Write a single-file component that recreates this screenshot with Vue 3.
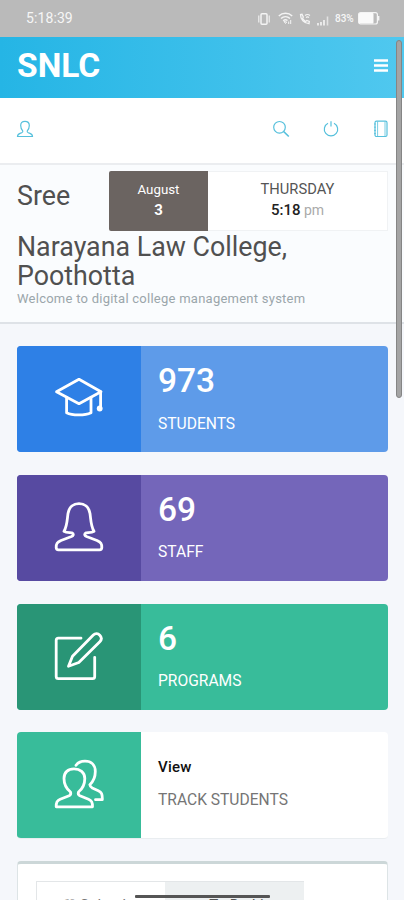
<script setup>
const cards = [
  { value: '973', label: 'STUDENTS', theme: 'blue', icon: 'cap' },
  { value: '69', label: 'STAFF', theme: 'purple', icon: 'woman' },
  { value: '6', label: 'PROGRAMS', theme: 'green', icon: 'note' },
  { value: 'View', label: 'TRACK STUDENTS', theme: 'white', icon: 'users' },
]
</script>

<template>
  <div class="screen">
    <div class="status">
      <span class="clock">5:18:39</span>
      <div class="sys">
        <svg class="s-vib" width="14" height="14" viewBox="0 0 14 14" fill="none" stroke="#f4f4f4">
          <rect x="4" y="1.7" width="6" height="10.6" rx="1" stroke-width="1.5" />
          <path d="M1.8 3.5v7M12.2 3.5v7" stroke-width="1.1" />
        </svg>
        <svg class="s-wifi" width="15" height="13" viewBox="0 0 15 13" fill="none" stroke="#f4f4f4" stroke-width="1.5">
          <path d="M.8 4C4.500 .4 10.500 .4 14.200 4M3 6.500c2.600-2.400 6.300-2.400 9 0M5.200 8.700c1.300-1.100 3-1.200 4.300-.2" />
          <path d="M6 9.500l1.500 2 1.200-1.500zM12.700 8v4M10.700 9.500v2.500" stroke-width="1" />
        </svg>
        <svg class="s-call" width="12" height="12" viewBox="0 0 12 12" fill="none" stroke="#f4f4f4">
          <path d="M1.500 1.500C1.500 6.500 5 10.300 10 10.700L10.300 8.500 7.800 7.500 6.500 8.600 3.600 5.600 4.300 4 3 1.300z" stroke-width="1.300" />
          <path d="M6 2.500c1.500-1.200 3.500-1.200 5 0M7 4.500c1-.8 2-.8 3 0" stroke-width="1.200" />
        </svg>
        <svg class="s-sig" width="12" height="11" viewBox="0 0 12 11" stroke="#f4f4f4" stroke-width="1.600">
          <path d="M1 8v2.500M4 7v3.500M7 5v5.500" /><path d="M10.500 1.500v9" opacity=".7" />
        </svg>
        <span class="pct">83%</span>
        <svg class="s-bat" width="22" height="13" viewBox="0 0 22 13">
          <rect x=".6" y=".6" width="18.800" height="11.400" rx="2" fill="none" stroke="#f4f4f4" stroke-width="1.200" />
          <rect x="1" y="1" width="14.500" height="10.600" rx="1" fill="#fafafa" />
          <path d="M20.700 4v4.500" stroke="#f4f4f4" stroke-width="1.400" />
        </svg>
      </div>
    </div>

    <header class="brandbar">
      <span class="brand">SNLC</span>
      <svg width="14" height="13" viewBox="0 0 14 13" stroke="#fff" stroke-width="2.300">
        <path d="M0 1.500h14M0 6.500h14M0 11.500h14" />
      </svg>
    </header>

    <nav class="tools">
      <svg class="t-user" width="18" height="18" viewBox="0 0 18 18">
        <path d="M6.700 10.800C5.400 9.300 4.700 7.600 4.700 5.400 4.700 2.600 6.300 1.300 9 1.300s4.300 1.300 4.300 4.100c0 2.200-.7 3.900-2 5.400-.4.900.1 1.500 1 1.900 1.700.8 4.200.9 4.200 3.800H1.500c0-2.900 2.500-3 4.200-3.800.9-.4 1.400-1 1-1.900z" />
      </svg>
      <svg class="t-search" width="18" height="18" viewBox="0 0 18 18">
        <circle cx="7.500" cy="7.300" r="5.800" /><path d="M11.600 11.500l5.200 5" stroke-width="1.700" />
      </svg>
      <svg class="t-power" width="16" height="18" viewBox="0 0 16 18">
        <path d="M5 3.200a6.700 6.700 0 1 0 6 0M8 1.200v5.300" />
      </svg>
      <svg class="t-book" width="16" height="18" viewBox="0 0 16 18">
        <rect x="2" y="1.200" width="12" height="15.300" rx="1.500" /><path d="M4.600 1.500v15M12 1.500v15M1 4h2M1 7.200h2M1 10.400h2M1 13.600h2" stroke-width=".8" />
      </svg>
    </nav>

    <section class="hero">
      <div class="top">
        <h2 class="sree">Sree</h2>
        <div class="datebox">
          <div class="date"><span>August</span><b>3</b></div>
          <div class="time"><span class="day">THURSDAY</span><span class="hour"><b>5:18</b> pm</span></div>
        </div>
      </div>
      <h2 class="college"><span>Narayana Law College,</span><br />Poothotta</h2>
      <p class="welcome">Welcome to digital college management system</p>
    </section>

    <main class="content">
      <article v-for="c in cards" :key="c.label" class="card" :class="c.theme">
        <div class="pic">
          <svg width="50" height="50" viewBox="0 0 50 50">
            <g v-if="c.icon === 'cap'">
              <path d="M2.500 18.800L25 6.300l22 12.500L25 30.700z" />
              <path d="M12.600 24.500v15.200c5.500 3 18.500 3 24.400 0V24.500M46.600 19v15" />
              <circle cx="45.700" cy="35.500" r="2.900" fill="#fff" stroke="none" />
            </g>
            <path v-else-if="c.icon === 'woman'" d="M10 29.300C13.200 24.500 13.200 17 14 11.500 15 5 19.500 1.700 25 1.700s10 3.300 11 9.800c.8 5.500.8 13 4 17.800-2 1.400-4.500 1.200-7.800 1.500-2.500 1.200-1.500 2.900.3 3.700L43 38.500c4 1.900 4.800 3 4.800 7q0 2.300-2.300 2.300h-41q-2.300 0-2.300-2.300c0-4 .8-5.100 4.800-7l10.500-4c1.800-.8 2.800-2.500.3-3.700-3.300-.3-5.800-.1-7.800-1.500z" />
            <g v-else-if="c.icon === 'note'">
              <path d="M27 7.200H4.300Q2.200 7.200 2.200 9.300v36.200q0 2.100 2.100 2.100h34.300q2.100 0 2.100-2.100V26.300" />
              <path d="M18.500 25.200L39.300 4.100c2-2 4.700-1.800 6.500.1s2 4.500 0 6.500L24.800 31.500 14.500 35.300z" />
            </g>
            <g v-else>
              <path d="M16.500 33c-4-3.200-6.500-7.700-6.500-13.500C10 13.300 14 9.900 20 9.900s10.800 3.400 10.800 9.600c0 5.800-2.300 10.300-6.300 13.500-.6 1.700 0 3 1.400 3.700l8.600 3.600c3.300 1.500 4 2.700 4 7.500H2.200c0-4.800.7-6 4-7.500l8.900-3.600c1.400-.7 2-2 1.400-3.700z" />
              <path d="M22 6.300C24 3.500 27 2.200 31 2.200c6.500 0 10.300 4 10.300 10.300 0 5.500-2 10-5.500 13.200.2 1.700 1.200 2.600 2.500 3.300l6 2.700c3.200 1.400 4.200 3.200 4 9h-6.800" />
            </g>
          </svg>
        </div>
        <div class="info">
          <div class="num">{{ c.value }}</div>
          <div class="lab">{{ c.label }}</div>
        </div>
      </article>

      <div class="panel">
        <div class="tabs">
          <div class="tab active">♡ Calendar</div>
          <div class="tab">✓ To Do List</div>
        </div>
      </div>
    </main>

    <div class="scroll"></div>
    <div class="homebar"></div>
  </div>
</template>

<style>
html, body { margin: 0; overflow: hidden; }
</style>

<style scoped>
.screen { position: relative; width: 404px; height: 900px; overflow: hidden; background: #f5f7fb; font-family: Roboto, "Liberation Sans", sans-serif; color: #404040; box-sizing: border-box; }
.screen * { box-sizing: border-box; }
.status { height: 37px; background: #bababa; display: flex; align-items: center; justify-content: space-between; padding: 0 24px 0 26px; color: #f6f6f6; }
.clock { font-size: 14px; letter-spacing: .1px; font-weight: 400; margin-top: -1px; }
.sys { display: flex; align-items: center; }
.s-wifi { margin-left: 7px; }
.s-call { margin-left: 6px; }
.s-sig { margin-left: 6px; margin-top: 4px; }
.pct { margin-left: 6px; width: 20px; font-size: 10px; font-weight: 500; }
.s-bat { margin-left: 3px; }
.brandbar { height: 61px; padding: 0 16px 0 17px; display: flex; align-items: center; justify-content: space-between; background: linear-gradient(90deg, #25b5e5, #50c8ef); }
.brandbar svg { margin-top: -5px; }
.brand { color: #fff; font-weight: 700; font-size: 33.500px; line-height: 40px; margin-top: -4px; }
.tools { height: 67px; background: #fff; border-bottom: 2px solid #ebedf0; display: flex; align-items: center; padding: 0 15px 3px 16px; }
.tools svg { fill: none; stroke: #56c0dc; stroke-width: 1.200; }
.t-user { margin-right: auto; }
.t-power { margin-left: 33px; }
.t-book { margin-left: 34px; }
.hero { height: 159px; background: #fafcfe; border-bottom: 2px solid #dee2e7; padding: 6px 16px 0 17px; }
.top { display: flex; justify-content: space-between; height: 60px; }
h2 { margin: 0; font-weight: 400; font-size: 26.800px; line-height: 29px; color: #505050; white-space: nowrap; }
.sree { padding-top: 11px; }
.datebox { width: 279px; height: 60px; display: flex; }
.date, .time { display: flex; flex-direction: column; align-items: center; padding-top: 8px; font-size: 14px; line-height: 21px; }
.date { width: 99px; background: #6b6461; color: #fff; font-size: 13.300px; border-radius: 2px 0 0 2px; }
.date b { font-size: 15px; }
.time { flex: 1; background: #fff; border: 1px solid #f0f2f4; border-left: 0; padding-top: 7px; color: #555; }
.day { font-size: 14.700px; }
.hour { color: #aaa; }
.hour b { color: #222; font-size: 15px; font-weight: 500; }
.college { margin-top: 2px; }
.welcome { margin: 0; font-size: 13px; line-height: 16px; color: #9ba6ab; letter-spacing: .250px; white-space: nowrap; }
.content { padding: 22px 16px 0 17px; display: flex; flex-direction: column; gap: 22.500px; }
.card { height: 106.300px; flex: none; display: flex; border-radius: 4px; overflow: hidden; color: #fff; }
.pic { width: 124px; flex: none; display: flex; align-items: center; justify-content: center; }
.pic svg { margin-top: -2px; fill: none; stroke: #fff; stroke-width: 2.800; stroke-linejoin: round; stroke-linecap: round; }
.info { padding: 15px 0 0 17px; }
.num { font-size: 33.500px; line-height: 40px; font-weight: 500; }
.lab { font-size: 15.600px; line-height: 20px; margin-top: 12.500px; }
.blue { background: #5e9be9; } .blue .pic { background: #2e80e6; }
.purple { background: #7466ba; } .purple .pic { background: #574aa1; }
.green { background: #38bc9a; } .green .pic { background: #299576; }
.white { background: #fff; border-bottom: 1px solid #e9edf0; color: #757575; } .white .pic { background: #38bc9a; }
.white .info { padding-top: 25px; }
.white .num { font-size: 15px; line-height: 20px; color: #111; letter-spacing: .200px; }
.panel { background: #fff; height: 80px; flex: none; border: 1px solid #dde4e6; border-top: 3px solid #ccd7d8; border-radius: 4px 4px 0 0; padding: 17px 18px 0; }
.tabs { display: flex; width: 268px; height: 60px; border-top: 1px solid #e3e6e8; border-left: 1px solid #e3e6e8; }
.tab { flex: 1; padding-top: 13px; font-size: 15px; line-height: 20px; text-align: center; background: #edf0f1; color: #555; }
.tab.active { flex: 0 0 128px; background: #fff; color: #777; }
.scroll { position: absolute; right: 2px; top: 40px; width: 6px; height: 358px; border-radius: 3px; background: #a4a4a4; border: 1px solid #858585; }
.homebar { position: absolute; left: 135px; top: 895px; width: 135px; height: 3px; background: #555; border-radius: 1px; }
</style>
